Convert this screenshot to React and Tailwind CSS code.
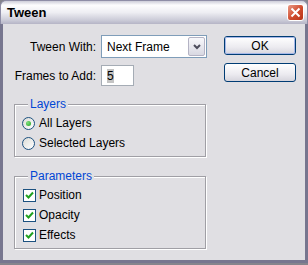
const Radio = ({ checked, label }) => (
  <div className="h-[20px] flex items-center pl-[7px]">
    <span className="w-[13px] h-[13px] rounded-full border border-[#1c5180] bg-[linear-gradient(135deg,#dcdcd7,#ffffff)] flex items-center justify-center">
      {checked && <span className="w-[5px] h-[5px] rounded-full bg-[radial-gradient(circle_at_35%_35%,#7fe07f,#21a121)]" />}
    </span>
    <span className="ml-[4px]">{label}</span>
  </div>
);

const Check = ({ label }) => (
  <div className="h-[20px] flex items-center pl-[8px]">
    <span className="w-[13px] h-[13px] border border-[#1c5180] bg-white flex items-center justify-center">
      <svg width="9" height="9" viewBox="0 0 9 9">
        <path d="M1 4 L3.5 6.5 L8 1.5" fill="none" stroke="#21a121" strokeWidth="2" />
      </svg>
    </span>
    <span className="ml-[3px]">{label}</span>
  </div>
);

const XpButton = ({ label, isDefault }) => (
  <button className="w-[72px] h-[19px] rounded-[3px] border border-[#003c74] bg-[linear-gradient(to_bottom,#ffffff,#ecebf0_60%,#d6d5dd)] flex items-center justify-center text-black">
    <span className={isDefault ? 'w-full h-full rounded-[2px] shadow-[inset_0_0_0_1px_#a6b8e8] flex items-center justify-center' : ''}>{label}</span>
  </button>
);

export default function App() {
  return (
    <div className="w-[308px] h-[265px] bg-[#85848c] font-['Liberation_Sans',Arial,sans-serif] text-[12px] text-black leading-[14px]">
      {/* title bar */}
      <div className="h-[24px] flex items-center justify-between rounded-t-[6px] border-x border-t border-[#8e8da6] bg-[linear-gradient(to_bottom,#cdcdd9_0%,#fdfdfe_18%,#eeeef3_50%,#c9c9d6_85%,#b5b4c6_100%)]">
        <span className="pl-[6px] font-bold text-[13px]">Tween</span>
        <span className="mr-[3px] w-[17px] h-[17px] rounded-[3px] border border-white bg-[linear-gradient(135deg,#e99a86,#cf4a2c_55%,#b83418)] flex items-center justify-center">
          <svg width="11" height="11" viewBox="0 0 11 11">
            <path d="M1.5 1.5 L9.5 9.5 M9.5 1.5 L1.5 9.5" stroke="#fff" strokeWidth="2" />
          </svg>
        </span>
      </div>

      {/* body */}
      <div className="h-[239px] bg-[#e0dfe3] border-x-[3px] border-b-[3px] border-[#77768f] flex">
        {/* left column */}
        <div className="w-[204px]">
          <div className="mt-[11px] flex items-center">
            <span className="w-[93px] text-right">Tween With:</span>
            <div className="ml-[5px] w-[106px] h-[23px] border border-[#7f9db9] bg-white flex items-center">
              <span className="flex-1 pl-[5px]">Next Frame</span>
              <span className="w-[17px] h-[19px] mr-[1px] rounded-[2px] border border-[#b4b3c4] bg-[linear-gradient(to_bottom,#f8f8fb,#d8d8e2)] flex items-center justify-center">
                <svg width="8" height="6" viewBox="0 0 8 6">
                  <path d="M1 1 L4 4 L7 1" fill="none" stroke="#4d4d5c" strokeWidth="2" />
                </svg>
              </span>
            </div>
          </div>

          <div className="mt-[7px] flex items-center">
            <span className="w-[93px] text-right">Frames to Add:</span>
            <div className="ml-[5px] w-[33px] h-[21px] border border-[#a5acb5] bg-white flex items-center pl-[5px]">
              <span className="bg-[#c4c4c4]">5</span>
            </div>
          </div>

          {/* layers */}
          <fieldset className="mt-[11px] ml-[11px] w-[192px] pb-[3px] border border-[#a09fa5] shadow-[1px_1px_0_#fff,inset_1px_1px_0_#fff]">
            <legend className="ml-[13px] px-[2px] text-[#0046d5] bg-[#e0dfe3]">Layers</legend>
            <div className="mt-[2px]">
              <Radio checked label="All Layers" />
              <Radio label="Selected Layers" />
            </div>
          </fieldset>

          {/* parameters */}
          <fieldset className="mt-[12px] ml-[11px] w-[192px] pb-[3px] border border-[#a09fa5] shadow-[1px_1px_0_#fff,inset_1px_1px_0_#fff]">
            <legend className="ml-[13px] px-[2px] text-[#0046d5] bg-[#e0dfe3]">Parameters</legend>
            <div className="mt-[2px]">
              <Check label="Position" />
              <Check label="Opacity" />
              <Check label="Effects" />
            </div>
          </fieldset>
        </div>

        {/* right column */}
        <div className="ml-[17px] mt-[12px] flex flex-col gap-[8px]">
          <XpButton label="OK" isDefault />
          <XpButton label="Cancel" />
        </div>
      </div>
    </div>
  );
}
